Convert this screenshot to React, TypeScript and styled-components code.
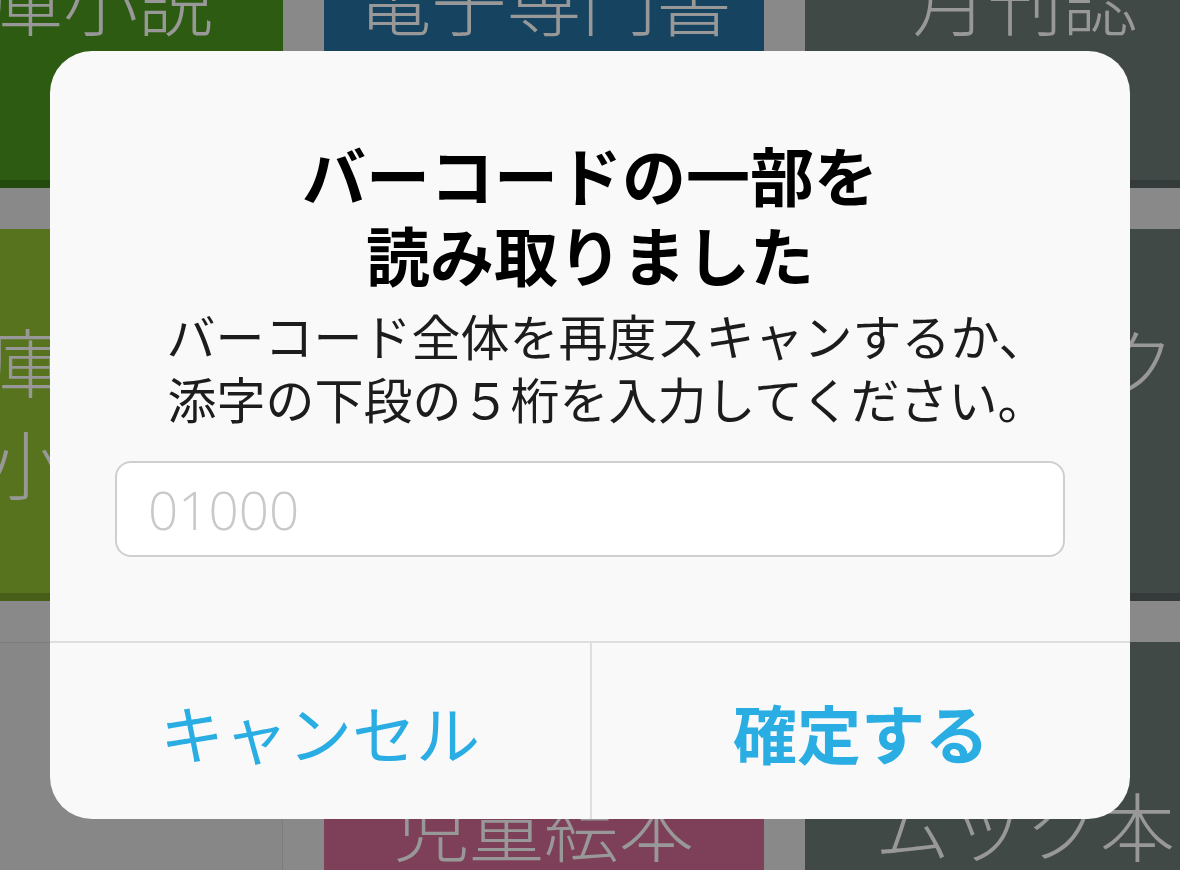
import React from 'react';
import styled, { createGlobalStyle } from 'styled-components';

const GlobalStyle = createGlobalStyle`
  html, body {
    margin: 0;
    padding: 0;
    background: #898989;
  }
  body {
    font-family: "Noto Sans CJK JP", "Noto Sans", sans-serif;
    overflow: hidden;
  }
`;

type TileData = {
  label?: string;
  color: string;
  plain?: boolean;
};

const tiles: TileData[] = [
  { label: '文庫小説', color: '#2d5b12' },
  { label: '電子専門書', color: '#16435f' },
  { label: '月刊誌', color: '#414947' },
  { label: '文庫新書\n小説', color: '#57731e' },
  { color: '#6a4a1d' },
  { label: 'コミック\n全般', color: '#414947' },
  { color: '#878787', plain: true },
  { label: '児童絵本', color: '#7e3f58' },
  { label: 'ムック本', color: '#414947' },
];

export default function App() {
  return (
    <>
      <GlobalStyle />
      <Screen>
        <TileGrid>
          {tiles.map((t, i) => (
            <Tile key={i} $color={t.color} $plain={t.plain}>
              {t.label && <TileLabel>{t.label}</TileLabel>}
            </Tile>
          ))}
        </TileGrid>

        <Backdrop>
          <Alert role="alertdialog">
            <AlertBody>
              <AlertTitle>
                バーコードの一部を
                <br />
                読み取りました
              </AlertTitle>
              <AlertMessage>
                バーコード全体を再度スキャンするか、
                <br />
                添字の下段の５桁を入力してください。
              </AlertMessage>
              <CodeField placeholder="01000" inputMode="numeric" />
            </AlertBody>
            <AlertActions>
              <ActionButton>キャンセル</ActionButton>
              <ActionButton $primary>確定する</ActionButton>
            </AlertActions>
          </Alert>
        </Backdrop>
      </Screen>
    </>
  );
}

const Screen = styled.div`
  position: relative;
  width: 1180px;
  height: 870px;
  overflow: hidden;
  background: #898989;
`;

const TileGrid = styled.div`
  display: grid;
  grid-template-columns: repeat(3, 440px);
  grid-auto-rows: 372px;
  gap: 41px;
  margin-left: -157px;
  margin-top: -184px;
`;

const Tile = styled.div<{ $color: string; $plain?: boolean }>`
  box-sizing: border-box;
  display: flex;
  align-items: center;
  justify-content: center;
  background: ${(p) => p.$color};
  border-bottom: 8px solid ${(p) => (p.$plain ? '#7c7c7c' : 'rgba(0, 0, 0, 0.18)')};
  border-top: ${(p) => (p.$plain ? '1px solid #7c7c7c' : 'none')};
  border-right: ${(p) => (p.$plain ? '1px solid #7c7c7c' : 'none')};
`;

const TileLabel = styled.span`
  white-space: pre-line;
  text-align: center;
  font-size: 75px;
  line-height: 102px;
  font-weight: 300;
  color: #989898;
`;

const Backdrop = styled.div`
  position: absolute;
  inset: 0;
  display: flex;
  align-items: center;
  justify-content: center;
`;

const Alert = styled.div`
  width: 1080px;
  background: #f9f9f9;
  border-radius: 42px;
  overflow: hidden;
  display: flex;
  flex-direction: column;
`;

const AlertBody = styled.div`
  display: flex;
  flex-direction: column;
  align-items: stretch;
  padding: 82px 60px 84px;
  text-align: center;
`;

const AlertTitle = styled.h2`
  margin: 0;
  font-size: 64px;
  line-height: 80px;
  font-weight: 700;
  color: #000;
`;

const AlertMessage = styled.p`
  margin: 10px 0 0;
  padding-left: 34px;
  font-size: 49px;
  line-height: 63px;
  font-weight: 400;
  color: #1c1c1c;
  white-space: nowrap;
`;

const CodeField = styled.input`
  box-sizing: border-box;
  margin: 32px 5px 0;
  height: 96px;
  padding: 0 31px;
  border: 2px solid #cfcfcf;
  border-radius: 16px;
  background: #fff;
  font-family: "Open Sans", "Noto Sans", sans-serif;
  font-size: 53px;
  font-weight: 300;
  color: #222;
  outline: none;

  &::placeholder {
    color: #c9c9c9;
  }
`;

const AlertActions = styled.div`
  display: grid;
  grid-template-columns: 1fr 1fr;
  height: 176px;
  border-top: 2px solid #dedede;
`;

const ActionButton = styled.button<{ $primary?: boolean }>`
  display: flex;
  align-items: center;
  justify-content: center;
  margin: 0;
  padding: 0;
  border: none;
  background: transparent;
  font-family: "Noto Sans CJK JP", sans-serif;
  font-size: 64px;
  font-weight: ${(p) => (p.$primary ? 700 : 400)};
  color: #29ade3;
  cursor: pointer;

  & + & {
    border-left: 2px solid #dedede;
  }
`;
